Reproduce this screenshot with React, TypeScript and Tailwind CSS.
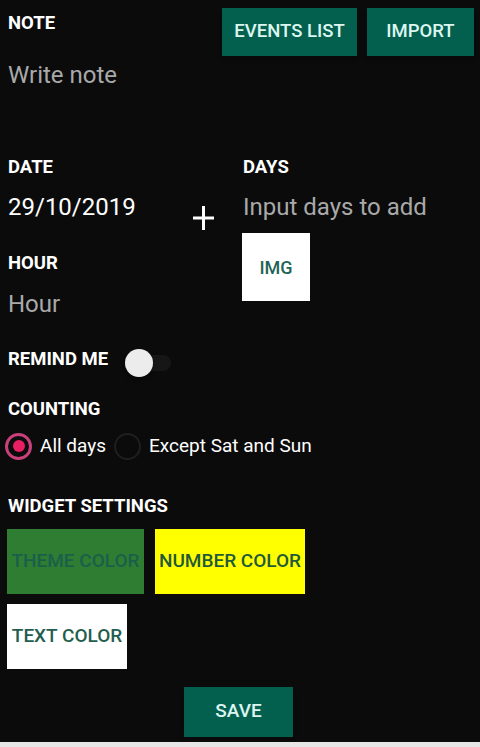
import React, { useState } from 'react';

const Label: React.FC<{ children: React.ReactNode; className?: string }> = ({ children, className = '' }) => (
  <div className={`text-[18.5px] leading-[21px] font-bold text-white ${className}`}>{children}</div>
);

const App: React.FC = () => {
  const [remind, setRemind] = useState(false);
  const [counting, setCounting] = useState<'all' | 'weekdays'>('all');

  return (
    <div className="min-h-[747px] bg-[#0b0b0b] font-['Roboto',sans-serif] flex flex-col">
      <div className="px-2 flex-1">
        {/* Note + top buttons */}
        <div className="flex justify-between items-start pt-2">
          <Label className="mt-[5px]">NOTE</Label>
          <div className="flex gap-[10px] mr-[-2px]">
            <button className="w-[135px] h-12 bg-[#03604f] text-[#ddf6f0] text-[18.5px] font-medium shadow-md">
              EVENTS LIST
            </button>
            <button className="w-[107px] h-12 bg-[#03604f] text-[#ddf6f0] text-[18.5px] font-medium shadow-md">
              IMPORT
            </button>
          </div>
        </div>
        <div className="mt-[5px] text-[24px] leading-[28px] text-[#a9a9a9]">Write note</div>

        {/* Date / days */}
        <div className="flex mt-[68px]">
          <div className="w-[185px]">
            <Label>DATE</Label>
            <div className="mt-[15px] text-[24px] leading-[28px] text-white">29/10/2019</div>
            <Label className="mt-[32px]">HOUR</Label>
            <div className="mt-[16px] text-[24px] leading-[28px] text-[#a9a9a9]">Hour</div>
          </div>
          <div className="w-[50px]">
            <svg width="22" height="24" viewBox="0 0 22 24" className="mt-[49px]">
              <rect x="0" y="10.5" width="21" height="3" fill="#ffffff" />
              <rect x="9" y="0" width="3" height="24" fill="#ffffff" />
            </svg>
          </div>
          <div className="flex-1">
            <Label>DAYS</Label>
            <div className="mt-[15px] text-[24px] leading-[28px] text-[#a9a9a9]">Input days to add</div>
            <button className="mt-[12px] ml-[-1px] w-[68px] h-[68px] bg-white text-[#1f6555] text-[18px] font-medium">
              IMG
            </button>
          </div>
        </div>

        {/* Remind me */}
        <div className="flex items-start mt-[31px]">
          <Label>REMIND ME</Label>
          <button
            onClick={() => setRemind(!remind)}
            className="relative ml-[17px] w-[46px] h-[28px] flex items-center"
          >
            <span className="w-[44px] h-[16px] rounded-full bg-[#161616] ml-[2px]" />
            <span className="absolute left-0 top-0 w-[28px] h-[28px] rounded-full bg-[#ececec] shadow-md" />
          </button>
        </div>

        {/* Counting */}
        <Label className="mt-[22px]">COUNTING</Label>
        <div className="flex items-center mt-[12px] text-[19px] text-white">
          <button onClick={() => setCounting('all')} className="ml-[-3px] flex items-center">
            <span className="w-[27px] h-[27px] rounded-full border-[3px] border-[#c8407a] flex items-center justify-center">
              <span className="w-[12px] h-[12px] rounded-full bg-[#e91e63]" />
            </span>
            <span className="ml-[8px]">All days</span>
          </button>
          <button onClick={() => setCounting('weekdays')} className="ml-[8px] flex items-center">
            <span className="w-[27px] h-[27px] rounded-full border-[2px] border-[#1f1f1f]" />
            <span className="ml-[8px]">Except Sat and Sun</span>
          </button>
        </div>

        {/* Widget settings */}
        <Label className="mt-[35px]">WIDGET SETTINGS</Label>
        <div className="flex gap-[11px] mt-[12px] ml-[-1px]">
          <button className="w-[137px] h-[65px] bg-[#2e7d32] text-[#1b5f4a] text-[19px] font-medium whitespace-nowrap">
            THEME COLOR
          </button>
          <button className="w-[150px] h-[65px] bg-[#ffff00] text-[#1f5a3a] text-[19px] font-medium whitespace-nowrap">
            NUMBER COLOR
          </button>
        </div>
        <button className="mt-[10px] ml-[-1px] w-[120px] h-[65px] bg-white text-[#1f5e4e] text-[19px] font-medium whitespace-nowrap">
          TEXT COLOR
        </button>

        <div className="flex justify-center mt-[18px]">
          <button className="w-[109px] h-[50px] bg-[#03604f] text-[#ddf6f0] text-[19px] font-medium shadow-md mr-[3px]">
            SAVE
          </button>
        </div>
      </div>
      <div className="h-[5px] bg-[#e6e6e6] mt-[5px]" />
    </div>
  );
};

export default App;
